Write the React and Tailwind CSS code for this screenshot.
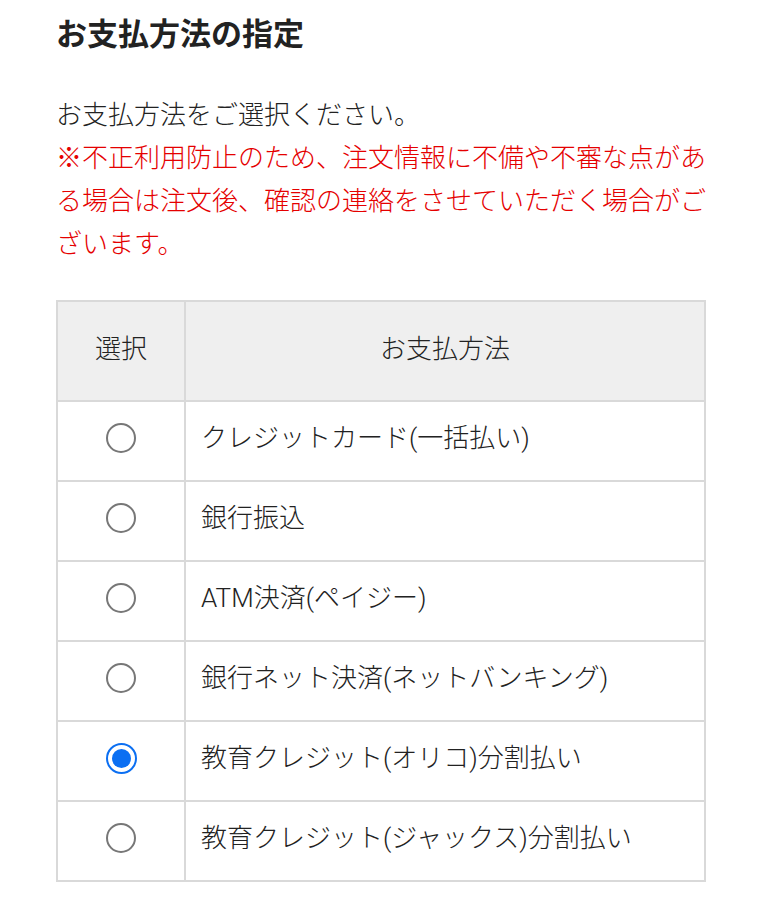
import React, { useState } from 'react';

const methods = [
  'クレジットカード(一括払い)',
  '銀行振込',
  'ATM決済(ペイジー)',
  '銀行ネット決済(ネットバンキング)',
  '教育クレジット(オリコ)分割払い',
  '教育クレジット(ジャックス)分割払い',
];

function Radio({ checked }) {
  if (checked) {
    return (
      <span className="flex h-[31px] w-[31px] items-center justify-center rounded-full border-[2.5px] border-[#0b6ff2]">
        <span className="h-[19px] w-[19px] rounded-full bg-[#0b6ff2]" />
      </span>
    );
  }
  return <span className="block h-[30px] w-[30px] rounded-full border-2 border-[#777] bg-white" />;
}

export default function App() {
  const [selected, setSelected] = useState(4);

  return (
    <div
      className="min-h-screen bg-white pl-[56px] pr-[55px] pt-[12px] text-[#222]"
      style={{ fontFamily: 'Roboto, "Noto Sans CJK JP", sans-serif' }}
    >
      <h2 className="text-[31px] font-bold leading-[46px] text-[#222]">お支払方法の指定</h2>

      <div className="mt-[36px] text-[26px] font-light leading-[43px]">
        <p>お支払方法をご選択ください。</p>
        <p className="text-[#e50000]">
          ※不正利用防止のため、注文情報に不備や不審な点がある場合は注文後、確認の連絡をさせていただく場合がございます。
        </p>
      </div>

      <table className="mt-[34px] w-full border-collapse border-2 border-[#d9d9d9] text-[26px] font-light">
        <thead>
          <tr className="h-[100px] bg-[#efefef]">
            <th className="w-[128px] border-2 border-[#d9d9d9] pb-[4px] font-light">選択</th>
            <th className="border-2 border-[#d9d9d9] pb-[4px] font-light">お支払方法</th>
          </tr>
        </thead>
        <tbody>
          {methods.map((m, i) => (
            <tr key={m} className="h-[80px] cursor-pointer" onClick={() => setSelected(i)}>
              <td className="border-2 border-[#d9d9d9] pb-[6px]">
                <div className="flex justify-center">
                  <Radio checked={selected === i} />
                </div>
              </td>
              <td className="border-2 border-[#d9d9d9] pb-[6px] pl-[15px]">{m}</td>
            </tr>
          ))}
        </tbody>
      </table>
    </div>
  );
}
